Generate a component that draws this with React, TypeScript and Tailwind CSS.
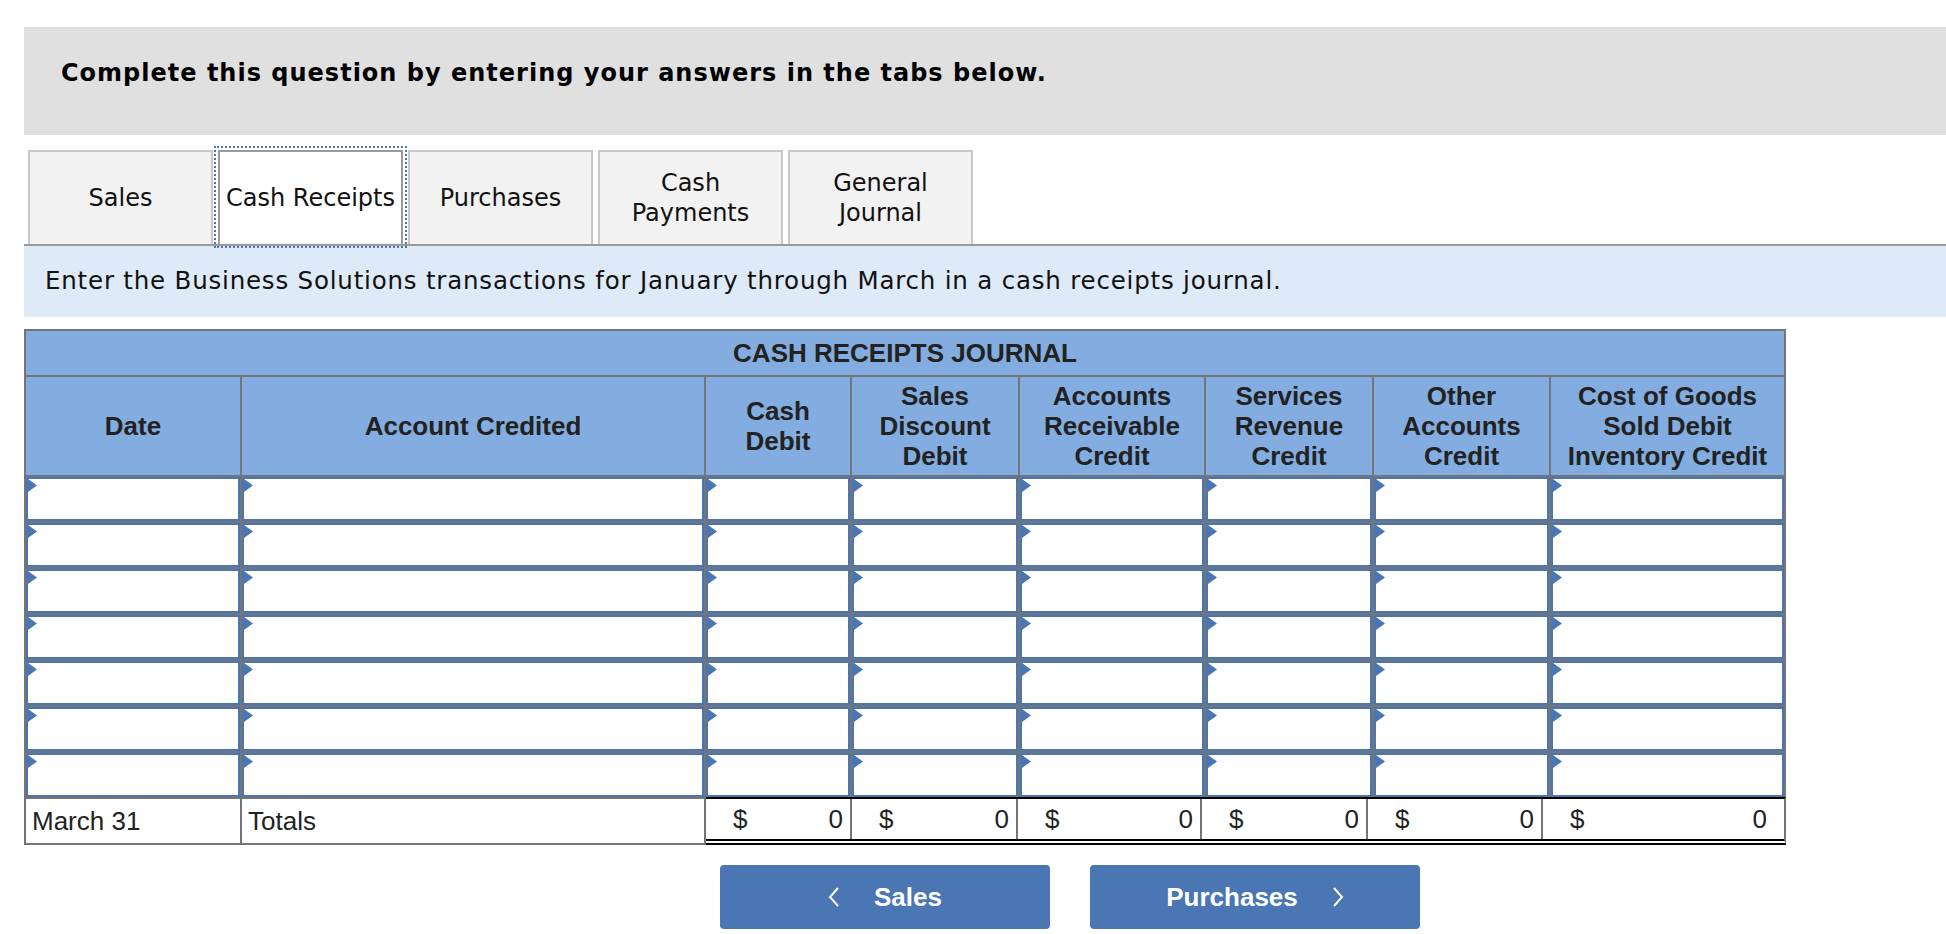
import React from "react";

const COLUMNS = [
  { lines: ["Date"] },
  { lines: ["Account Credited"] },
  { lines: ["Cash", "Debit"] },
  { lines: ["Sales", "Discount", "Debit"] },
  { lines: ["Accounts", "Receivable", "Credit"] },
  { lines: ["Services", "Revenue", "Credit"] },
  { lines: ["Other", "Accounts", "Credit"] },
  { lines: ["Cost of Goods", "Sold Debit", "Inventory Credit"] },
];

const MONEY_WIDTHS = ["w-[144px]", "w-[166px]", "w-[184px]", "w-[166px]", "w-[175px]", "w-[233px]"];

const TABS = [
  { label: ["Sales"], active: false },
  { label: ["Cash Receipts"], active: true },
  { label: ["Purchases"], active: false },
  { label: ["Cash", "Payments"], active: false },
  { label: ["General", "Journal"], active: false },
];

const ROW_COUNT = 7;

function Marker() {
  return (
    <svg className="absolute left-0 top-0" width="9" height="13" viewBox="0 0 9 13">
      <polygon points="0,0 9,6.5 0,13" fill="#4a76b4" />
    </svg>
  );
}

function Chevron({ dir }: { dir: "left" | "right" }) {
  return (
    <svg width="12" height="20" viewBox="0 0 12 20" fill="none">
      <polyline
        points={dir === "left" ? "10,1 2,10 10,19" : "2,1 10,10 2,19"}
        stroke="white"
        strokeWidth="2"
      />
    </svg>
  );
}

export default function App() {
  return (
    <div className="h-[934px] w-full overflow-hidden bg-white font-['DejaVu_Sans',sans-serif] text-[#111]">
      <div className="pl-[24px] pt-[27px]">
        {/* Instruction banner */}
        <div className="h-[108px] bg-[#e0e0e0] pl-[37px] pt-[30px]">
          <p className="text-[24px] font-bold leading-[32px] tracking-[1px] text-black">
            Complete this question by entering your answers in the tabs below.
          </p>
        </div>

        {/* Tabs */}
        <div className="mt-[15px] flex gap-[5px] pl-[4px]">
          {TABS.map((tab, i) => (
            <div
              key={i}
              className={
                tab.active
                  ? "relative flex h-[94px] w-[185px] flex-col items-center justify-center border-2 border-b-0 border-[#9a9a9a] bg-white text-[24px] leading-[30px]"
                  : "flex h-[94px] w-[185px] flex-col items-center justify-center border-2 border-b-0 border-[#c8c8c8] bg-[#f2f2f2] text-[24px] leading-[30px]"
              }
            >
              {tab.active && (
                <span className="absolute -inset-x-[6px] -bottom-[4px] -top-[6px] border-2 border-dotted border-[#4a76b4]" />
              )}
              {tab.label.map((l) => (
                <span key={l} className="whitespace-nowrap">{l}</span>
              ))}
            </div>
          ))}
        </div>

        {/* Instruction strip */}
        <div className="flex h-[73px] items-center border-t-2 border-[#9a9a9a] bg-[#deeaf7] pl-[21px] text-[24.5px] tracking-[0.8px]">
          Enter the Business Solutions transactions for January through March in a cash receipts journal.
        </div>

        {/* Journal */}
        <div className="mt-[12px] w-[1762px] font-['Liberation_Sans',Arial,sans-serif] text-[#222]">
          <div className="grid grid-cols-[214px_462px_144px_166px_184px_166px_175px_233px] gap-[2px] bg-[#757575] p-[2px] pb-0">
            <div className="col-span-8 flex h-[44px] items-center justify-center bg-[#83ade0] text-[26px] font-bold">
              CASH RECEIPTS JOURNAL
            </div>
            {COLUMNS.map((c) => (
              <div
                key={c.lines.join()}
                className="flex h-[98px] flex-col items-center justify-center bg-[#83ade0] text-center text-[26px] font-bold leading-[30px]"
              >
                {c.lines.map((l) => (
                  <span key={l} className="whitespace-nowrap">{l}</span>
                ))}
              </div>
            ))}
            {Array.from({ length: ROW_COUNT }).map((_, r) =>
              COLUMNS.map((_c, ci) => (
                <div key={`${r}-${ci}`} className="relative h-[44px] border-2 border-[#4a76b4] bg-white">
                  <Marker />
                </div>
              ))
            )}
          </div>

          {/* Totals */}
          <div className="flex h-[48px] text-[26px]">
            <div className="flex w-[218px] items-center border-2 border-[#757575] pl-[6px]">March 31</div>
            <div className="flex w-[464px] items-center border-y-2 border-r-2 border-[#757575] pl-[6px]">Totals</div>
            <div className="flex w-[1080px] border-t-2 border-b-[6px] border-r-2 border-double border-t-black border-b-black border-r-[#757575]">
              {MONEY_WIDTHS.map((w, i) => (
                <div
                  key={i}
                  className={`flex ${w} items-center justify-between pl-[27px] pr-[7px] ${i > 0 ? "border-l-2 border-[#757575]" : ""}`}
                >
                  <span>$</span>
                  <span>0</span>
                </div>
              ))}
            </div>
          </div>
        </div>

        {/* Navigation */}
        <div className="ml-[696px] mt-[20px] flex gap-[40px] font-['Liberation_Sans',Arial,sans-serif] text-[26px] font-bold text-white">
          <button className="flex h-[64px] w-[330px] items-center justify-center gap-[34px] rounded-[4px] bg-[#4a76b4]">
            <Chevron dir="left" />
            <span>Sales</span>
          </button>
          <button className="flex h-[64px] w-[330px] items-center justify-center gap-[34px] rounded-[4px] bg-[#4a76b4]">
            <span>Purchases</span>
            <Chevron dir="right" />
          </button>
        </div>
      </div>
    </div>
  );
}
